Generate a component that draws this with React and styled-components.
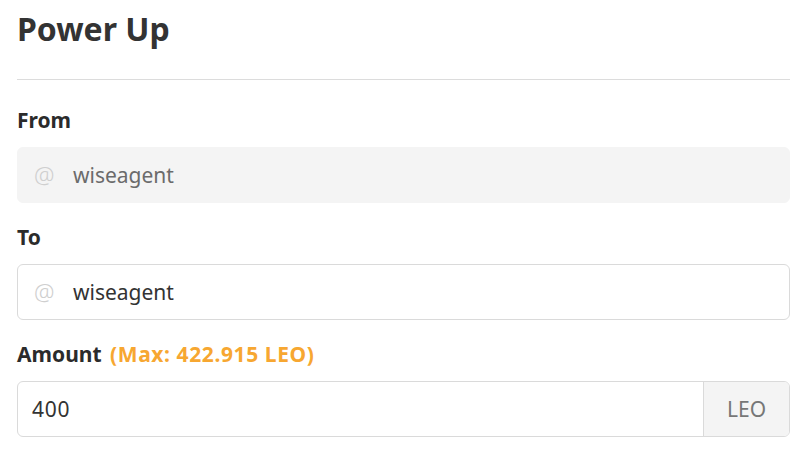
import styled, { createGlobalStyle } from "styled-components";

const Global = createGlobalStyle`
    body {
        margin: 0;
        background: #fff;
        font-family: "Noto Sans", "Open Sans", sans-serif;
        color: #333;
    }
`

export default function App() {
    return (
        <Page>
            <Global />
            <Title>Power Up</Title>
            <Divider />
            <Field>
                <Label>From</Label>
                <InputBox disabled>
                    <At>@</At>
                    <Value disabled>wiseagent</Value>
                </InputBox>
            </Field>
            <Field>
                <Label>To</Label>
                <InputBox>
                    <At>@</At>
                    <Value>wiseagent</Value>
                </InputBox>
            </Field>
            <Field>
                <Label>
                    Amount <Max>(Max: 422.915 LEO)</Max>
                </Label>
                <InputBox>
                    <Value plain>400</Value>
                    <Suffix>LEO</Suffix>
                </InputBox>
            </Field>
        </Page>
    )
}

const Page = styled.div`
    width: 773px;
    padding: 9px 10px 0 17px;
    display: flex;
    flex-direction: column;
`
const Title = styled.h1`
    margin: 0;
    font-size: 32px;
    line-height: 40px;
    font-weight: 700;
    color: #333;
`
const Divider = styled.hr`
    margin: 30px 0 28px;
    border: none;
    border-top: 1px solid #dcdcdc;
`
const Field = styled.div`
    display: flex;
    flex-direction: column;
    margin-bottom: 22px;
`
const Label = styled.div`
    font-size: 21px;
    line-height: 24px;
    font-weight: 700;
    color: #2b2b2b;
    margin-bottom: 15px;
`
const Max = styled.span`
    color: #f7a731;
    margin-left: 3px;
    letter-spacing: 0.6px;
`
const InputBox = styled.div`
    height: 56px;
    box-sizing: border-box;
    display: flex;
    align-items: stretch;
    border-radius: 6px;
    overflow: hidden;
    border: 1px solid ${p => p.disabled ? "#f4f4f4" : "#dadada"};
    background: ${p => p.disabled ? "#f4f4f4" : "#fff"};
`
const At = styled.span`
    display: flex;
    align-items: center;
    padding-left: 16px;
    width: 39px;
    color: #cfcfcf;
    font-size: 23px;
    font-weight: 300;
`
const Value = styled.span`
    flex: 1;
    display: flex;
    align-items: center;
    padding-left: ${p => p.plain ? "14px" : "0"};
    font-size: 21px;
    letter-spacing: ${p => p.plain ? "0.8px" : "0"};
    color: ${p => p.disabled ? "#6b6b6b" : "#333"};
`
const Suffix = styled.span`
    width: 85px;
    display: flex;
    align-items: center;
    justify-content: center;
    background: #f4f4f4;
    border-left: 1px solid #dadada;
    color: #777;
    font-size: 21px;
`
